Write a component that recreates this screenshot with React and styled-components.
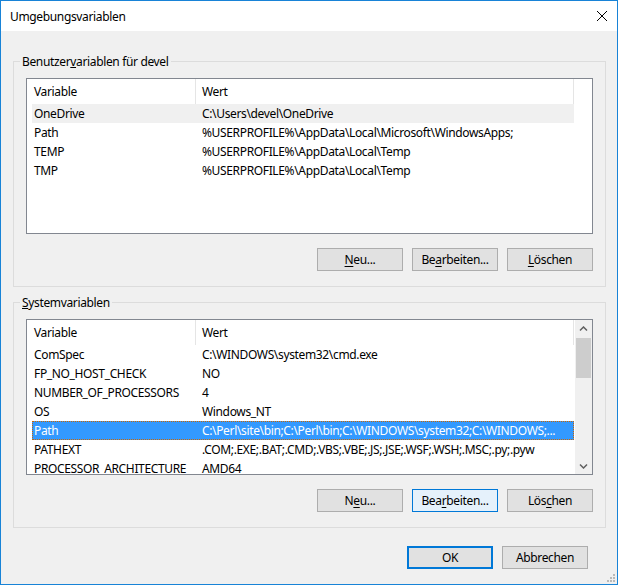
import styled, { createGlobalStyle } from "styled-components";

const FONT = `"Noto Sans", "Liberation Sans", sans-serif`;

const GlobalStyle = createGlobalStyle`
  body {
    margin: 0;
    background: #ffffff;
    font-family: ${FONT};
  }
  * {
    box-sizing: border-box;
  }
`;

const userVars = [
  ["OneDrive", "C:\\Users\\devel\\OneDrive"],
  ["Path", "%USERPROFILE%\\AppData\\Local\\Microsoft\\WindowsApps;"],
  ["TEMP", "%USERPROFILE%\\AppData\\Local\\Temp"],
  ["TMP", "%USERPROFILE%\\AppData\\Local\\Temp"],
];

const systemVars = [
  ["ComSpec", "C:\\WINDOWS\\system32\\cmd.exe"],
  ["FP_NO_HOST_CHECK", "NO"],
  ["NUMBER_OF_PROCESSORS", "4"],
  ["OS", "Windows_NT"],
  ["Path", "C:\\Perl\\site\\bin;C:\\Perl\\bin;C:\\WINDOWS\\system32;C:\\WINDOWS;..."],
  ["PATHEXT", ".COM;.EXE;.BAT;.CMD;.VBS;.VBE;.JS;.JSE;.WSF;.WSH;.MSC;.py;.pyw"],
  ["PROCESSOR_ARCHITECTURE", "AMD64"],
];

function Mnemonic({ text, at }) {
  return (
    <>
      {text.slice(0, at)}
      <u>{text[at]}</u>
      {text.slice(at + 1)}
    </>
  );
}

function Chevron({ down }) {
  return (
    <svg width="9" height="6" viewBox="0 0 9 6">
      <path
        d={down ? "M1 1.5 L4.5 5 L8 1.5" : "M1 4.5 L4.5 1 L8 4.5"}
        fill="none"
        stroke="#606060"
        strokeWidth="1.5"
      />
    </svg>
  );
}

function VariableList({ rows, selected, active, scroll }) {
  return (
    <StyledListView>
      <StyledListBody>
        <StyledListHeader>
          <StyledHeaderCell $width={169}>Variable</StyledHeaderCell>
          <StyledHeaderCell $width={378} $pad={6}>
            Wert
          </StyledHeaderCell>
        </StyledListHeader>
        {rows.map(([name, value], i) => (
          <StyledRow
            key={name}
            $state={i === selected ? (active ? "active" : "inactive") : "none"}
          >
            <StyledCell>{name}</StyledCell>
            <StyledCell $pad={6}>{value}</StyledCell>
          </StyledRow>
        ))}
      </StyledListBody>
      {scroll && (
        <StyledScrollBar>
          <StyledScrollArrow>
            <Chevron />
          </StyledScrollArrow>
          <StyledScrollThumb />
          <StyledScrollTrack />
          <StyledScrollArrow>
            <Chevron down />
          </StyledScrollArrow>
        </StyledScrollBar>
      )}
    </StyledListView>
  );
}

function VariableGroup({ title, titleKey, rows, selected, active, scroll, keys, focusEdit }) {
  return (
    <StyledGroupBox>
      <StyledLegend>
        <Mnemonic text={title} at={titleKey} />
      </StyledLegend>
      <StyledGroupBody>
        <VariableList rows={rows} selected={selected} active={active} scroll={scroll} />
        <StyledButtonRow>
          <StyledButton>
            <Mnemonic text="Neu..." at={keys[0]} />
          </StyledButton>
          <StyledButton $focused={focusEdit}>
            <Mnemonic text="Bearbeiten..." at={keys[1]} />
          </StyledButton>
          <StyledButton>
            <Mnemonic text="Löschen" at={keys[2]} />
          </StyledButton>
        </StyledButtonRow>
      </StyledGroupBody>
    </StyledGroupBox>
  );
}

export default function App() {
  return (
    <>
      <GlobalStyle />
      <StyledWindow>
        <StyledTitleBar>
          <StyledTitle>Umgebungsvariablen</StyledTitle>
          <svg width="10" height="10" viewBox="0 0 10 10">
            <path d="M0 0 L10 10 M10 0 L0 10" stroke="#000" strokeWidth="1" />
          </svg>
        </StyledTitleBar>
        <StyledGroups>
          <VariableGroup
            title="Benutzervariablen für devel"
            titleKey={8}
            rows={userVars}
            selected={0}
            active={false}
            keys={[0, 2, 0]}
          />
          <VariableGroup
            title="Systemvariablen"
            titleKey={0}
            rows={systemVars}
            selected={4}
            active
            scroll
            focusEdit
            keys={[1, 3, 3]}
          />
        </StyledGroups>
        <StyledFooter>
          <StyledButton $default>OK</StyledButton>
          <StyledButton>Abbrechen</StyledButton>
        </StyledFooter>
        <StyledGrip width="10" height="10" viewBox="0 0 10 10">
          <rect x="8" y="2" width="2" height="2" fill="#b9b9b9" />
          <rect x="5" y="5" width="2" height="2" fill="#b9b9b9" />
          <rect x="8" y="5" width="2" height="2" fill="#b9b9b9" />
          <rect x="2" y="8" width="2" height="2" fill="#b9b9b9" />
          <rect x="5" y="8" width="2" height="2" fill="#b9b9b9" />
          <rect x="8" y="8" width="2" height="2" fill="#b9b9b9" />
        </StyledGrip>
      </StyledWindow>
    </>
  );
}

const StyledWindow = styled.div`
  position: relative;
  width: 618px;
  height: 585px;
  border: 1px solid #1883d7;
  background: #f0f0f0;
  display: flex;
  flex-direction: column;
  font-family: ${FONT};
  font-size: 12px;
  letter-spacing: -0.35px;
  color: #000;
`;

const StyledTitleBar = styled.div`
  height: 30px;
  flex: none;
  background: #ffffff;
  display: flex;
  align-items: center;
  justify-content: space-between;
  padding: 0 10px 0 9px;
`;

const StyledTitle = styled.span`
  font-size: 12px;
  line-height: 16px;
  padding-top: 1px;
`;

const StyledGroups = styled.div`
  display: flex;
  flex-direction: column;
  gap: 7px;
  padding: 22px 11px 0 12px;
`;

const StyledGroupBox = styled.fieldset`
  margin: 0;
  padding: 0;
  min-width: 0;
  border: 1px solid #dcdcdc;
`;

const StyledLegend = styled.legend`
  margin-left: 6px;
  padding: 0 2px;
  font-size: 12px;
  line-height: 17px;
`;

const StyledGroupBody = styled.div`
  padding: 8px 12px 15px 12px;
`;

const StyledListView = styled.div`
  height: 156px;
  border: 1px solid #828790;
  background: #ffffff;
  display: flex;
  overflow: hidden;
`;

const StyledListBody = styled.div`
  flex: 1;
  min-width: 0;
`;

const StyledListHeader = styled.div`
  display: flex;
  height: 25px;
`;

const StyledHeaderCell = styled.div`
  width: ${(p) => p.$width}px;
  padding: 1px 0 0 ${(p) => p.$pad ?? 7}px;
  border-right: 1px solid #e5e5e5;
  line-height: 24px;
  white-space: nowrap;
`;

const StyledRow = styled.div`
  display: grid;
  grid-template-columns: 164px 378px;
  margin-left: 5px;
  width: 542px;
  height: 19px;
  padding-top: 1px;
  line-height: 18px;
  background: ${(p) =>
    p.$state === "active" ? "#3399ff" : p.$state === "inactive" ? "#f0f0f0" : "transparent"};
  color: ${(p) => (p.$state === "active" ? "#ffffff" : "#000000")};
  outline: ${(p) => (p.$state === "active" ? "1px dotted #cc6600" : "none")};
  outline-offset: -1px;
`;

const StyledCell = styled.div`
  padding-left: ${(p) => p.$pad ?? 2}px;
  white-space: nowrap;
  overflow: hidden;
`;

const StyledScrollBar = styled.div`
  width: 17px;
  flex: none;
  background: #f0f0f0;
  display: flex;
  flex-direction: column;
`;

const StyledScrollArrow = styled.div`
  height: 17px;
  flex: none;
  display: flex;
  align-items: center;
  justify-content: center;
`;

const StyledScrollThumb = styled.div`
  height: 40px;
  flex: none;
  margin: 1px 1px 0;
  background: #cdcdcd;
`;

const StyledScrollTrack = styled.div`
  flex: 1;
`;

const StyledButtonRow = styled.div`
  display: flex;
  justify-content: flex-end;
  gap: 9px;
  margin-top: 14px;
`;

const StyledButton = styled.button`
  width: 86px;
  height: 23px;
  padding: 0;
  font-family: ${FONT};
  font-size: 12px;
  letter-spacing: -0.35px;
  color: #000;
  background: ${(p) => (p.$focused ? "#e5f1fb" : "#e1e1e1")};
  border: ${(p) =>
    p.$default ? "2px solid #0078d7" : p.$focused ? "1px solid #0078d7" : "1px solid #adadad"};
  u {
    text-underline-offset: 2px;
  }
`;

const StyledFooter = styled.div`
  display: flex;
  justify-content: flex-end;
  gap: 9px;
  margin-top: 18px;
  padding-right: 29px;
`;

const StyledGrip = styled.svg`
  position: absolute;
  right: 2px;
  bottom: 2px;
`;
